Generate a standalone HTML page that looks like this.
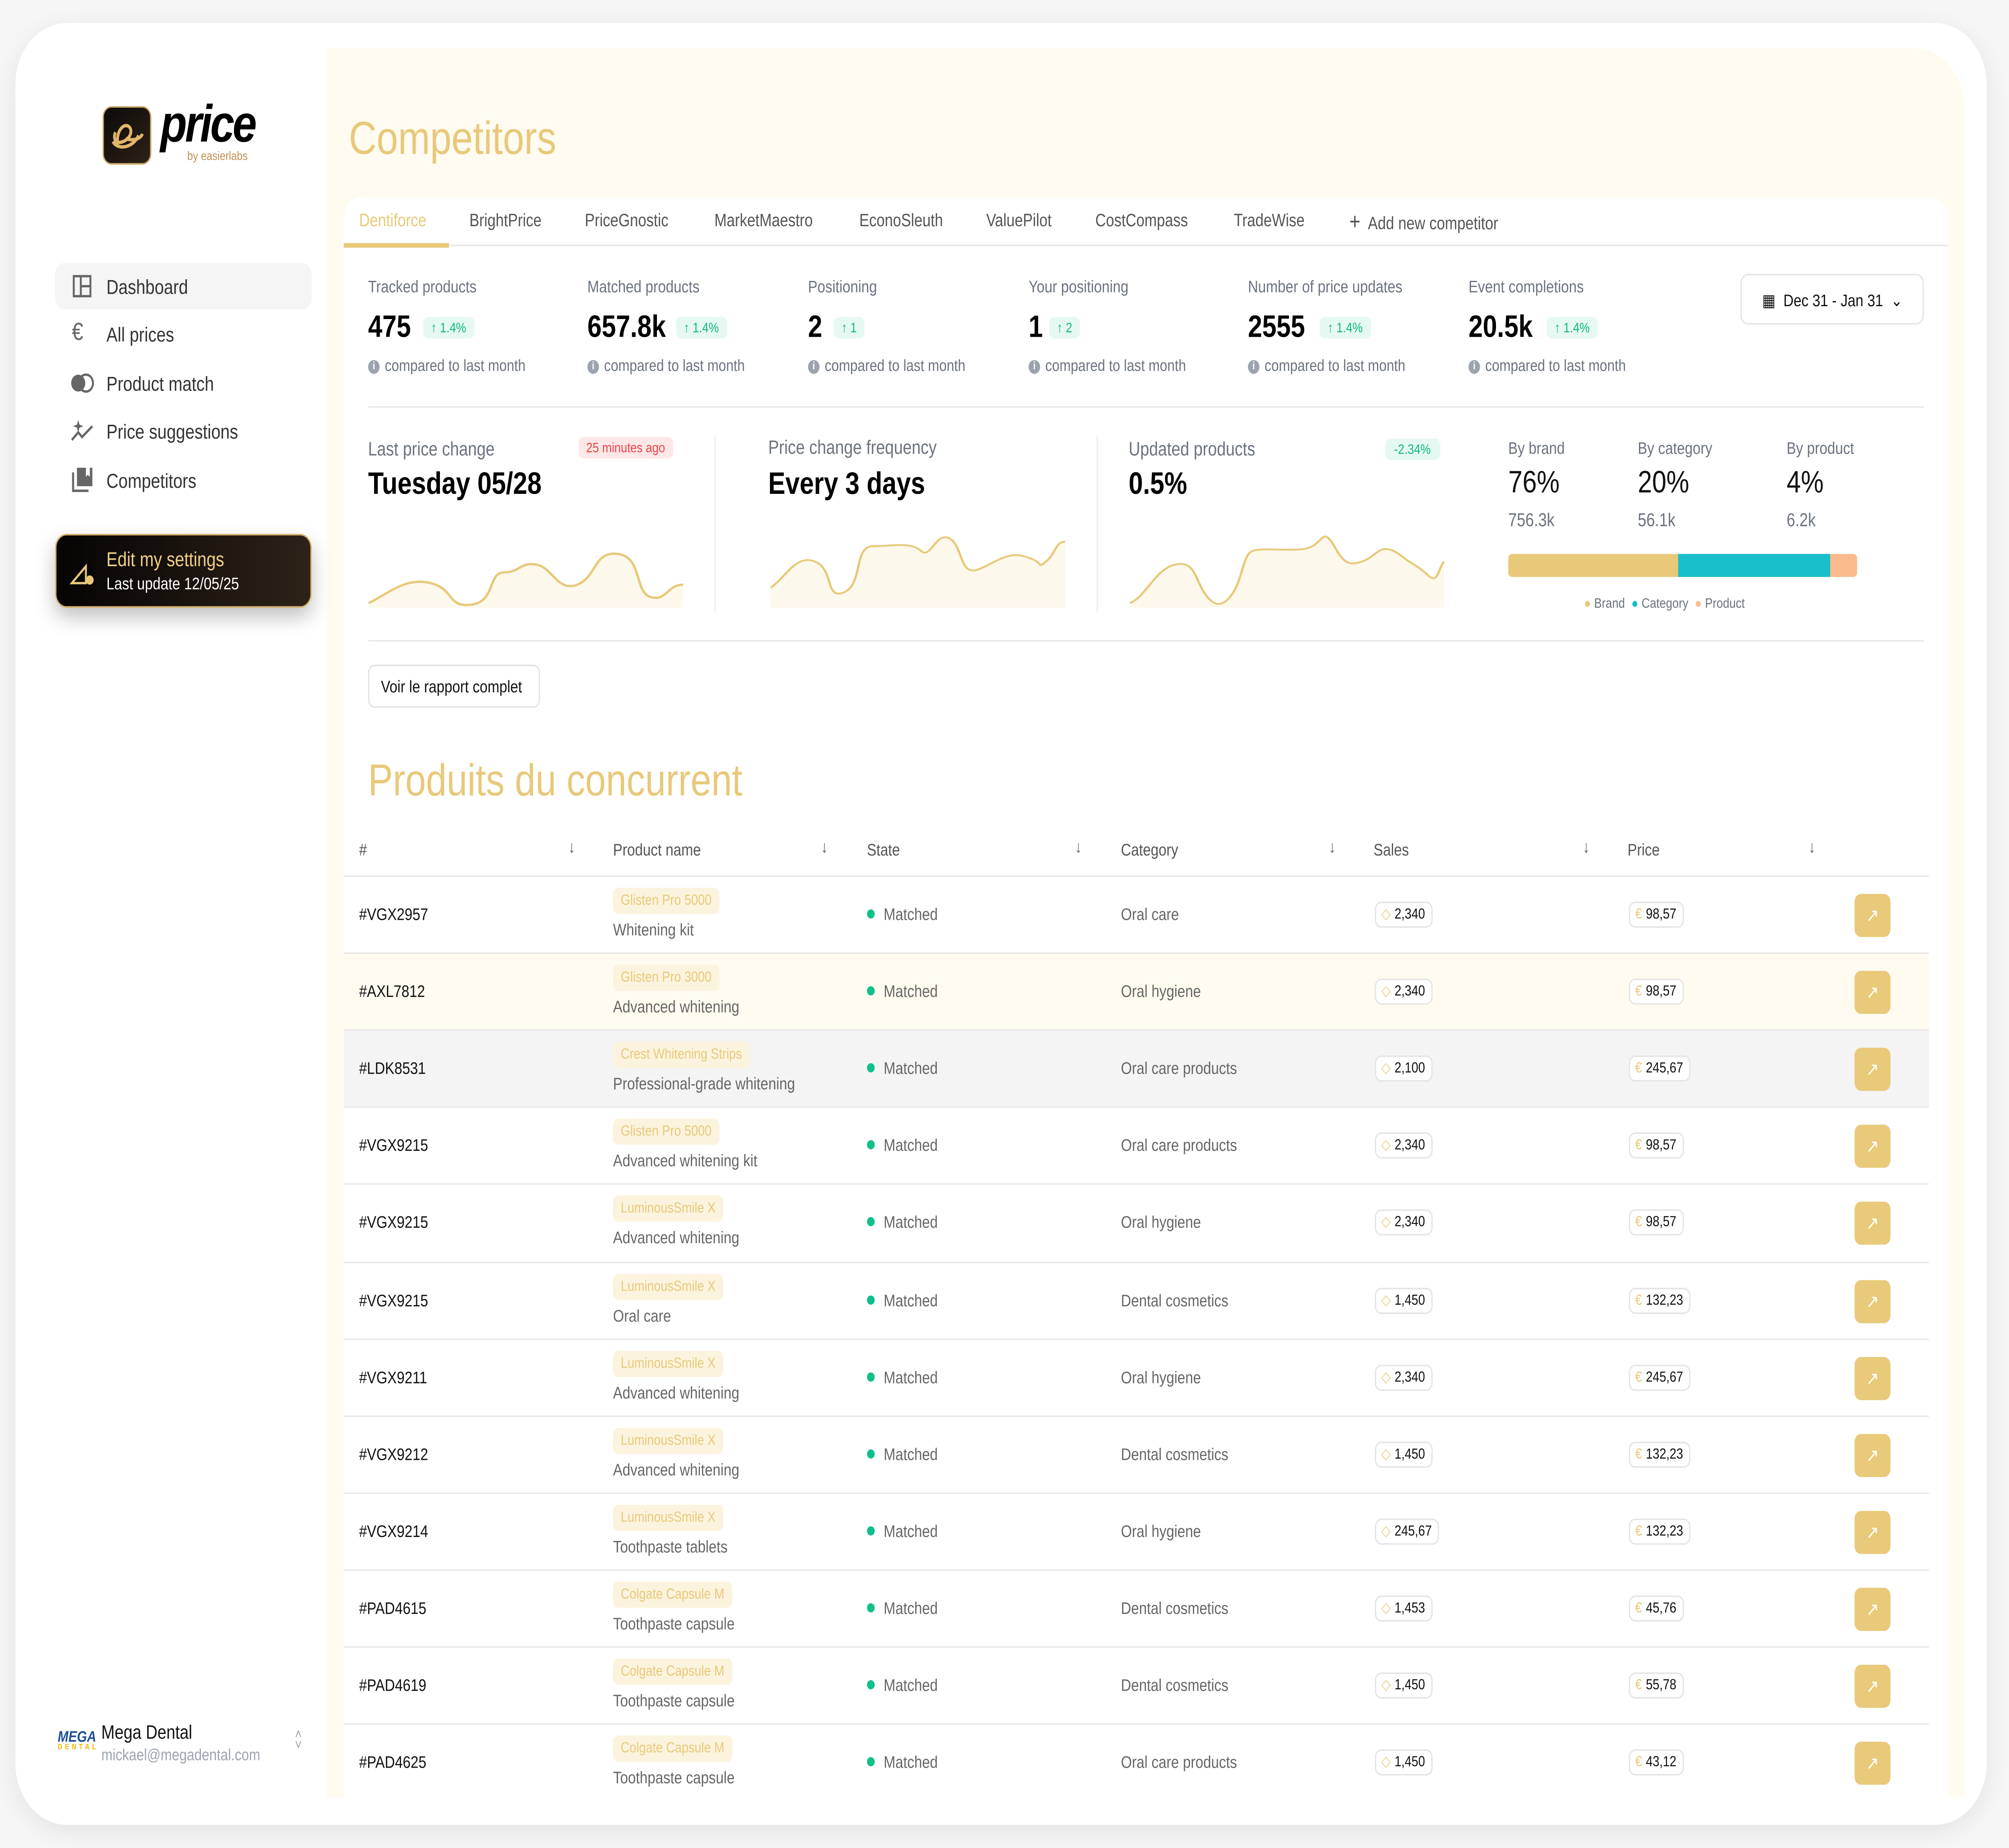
<!DOCTYPE html>
<html><head><meta charset="utf-8"><style>
*{box-sizing:border-box;margin:0;padding:0}
html,body{width:5005px;height:4599px;overflow:hidden;background:#f6f6f6}
#c{position:absolute;left:0;top:0;width:1568px;height:1201px;transform:scale(3.192,3.829);transform-origin:0 0;font-family:"Liberation Sans",sans-serif;color:#111}
.a{position:absolute;white-space:nowrap}
.card{left:12px;top:15px;width:1537px;height:1171px;background:#fff;border-radius:40px;box-shadow:0 4px 18px rgba(0,0,0,.08)}
.main{left:255px;top:31px;width:1277px;height:1137px;background:#fffbf0;border-radius:0 40px 0 0}
.panel{left:268px;top:128px;width:1251px;height:1040px;background:#fff;border-radius:14px 14px 0 0}
.nav{font-size:13px;color:#333}
.tab{top:138px;font-size:11.5px;color:#555}
.lbl{font-size:11px;color:#6b7280}
.val{font-size:20px;font-weight:bold;color:#000}
.bad{font-size:9px;color:#10b981;background:#e6f8f2;border-radius:4px;padding:2px 6px}
.cmp{font-size:10.5px;color:#6b7280}
.cmp:before{content:"i";display:inline-block;width:9px;height:9px;border-radius:50%;background:#9ca3af;color:#fff;font-size:7px;text-align:center;line-height:9px;margin-right:4px;font-weight:bold;vertical-align:1px}
.hd{top:547px;font-size:11px;color:#555}
.ar{top:545px;font-size:11px;color:#666}
.row{left:268px;width:1236px;height:50px;border-top:1.5px solid #e8e8e8}
.id{left:12px;top:19px;font-size:11px;color:#111}
.tag{left:210px;top:7px;font-size:9.5px;color:#e8c97a;background:#fbf3dd;border-radius:4px;padding:3px 6px}
.sub{left:210px;top:29px;font-size:11px;color:#666}
.st{left:408px;top:19px;font-size:11px;color:#666}
.st:before{content:"";display:inline-block;width:6px;height:6px;border-radius:50%;background:#10c08a;margin-right:7px;vertical-align:1px}
.cat{left:606px;top:19px;font-size:11px;color:#666}
.pill{top:16px;font-size:9.5px;color:#111;border:1px solid #e5e5e5;border-radius:5px;padding:2px 5px 2px 4px;background:#fff}
.pill b{color:#e8c97a;font-weight:normal;margin-right:3px}
.go{left:1178px;top:11px;width:28px;height:28px;background:#e9c97a;border-radius:5px;color:#fff;font-size:12px;text-align:center;line-height:28px}
</style></head><body><div id="c">
<div class="a card"></div>
<div class="a main"></div>
<div class="a" style="left:80px;top:69px;width:38px;height:38px;border-radius:7px;background:linear-gradient(135deg,#0c0a08,#2d2218);border:1px solid #c9a76a"></div>
<svg class="a" style="left:84px;top:76px" width="30" height="24"><path d="M4 16C8 22 20 20 24 12M8 18C6 10 12 4 16 6S18 14 12 16S4 14 6 10M14 14C20 16 26 14 27 11" fill="none" stroke="#e2b56a" stroke-width="2.2"/></svg>
<div class="a" style="left:125px;top:62px;font-size:34px;font-weight:bold;font-style:italic;letter-spacing:-1.5px;color:#000">price</div>
<div class="a" style="left:146px;top:97px;font-size:8px;color:#c09050">by easierlabs</div>
<div class="a" style="left:43px;top:171px;width:200px;height:30px;background:#f5f5f5;border-radius:7px"></div>
<svg class="a" style="left:56px;top:178px" width="16" height="16" viewBox="0 0 16 16"><rect x="1.5" y="1.5" width="13" height="13" fill="none" stroke="#666" stroke-width="1.5"/><path d="M7 1.5V14.5M7 8H14.5" stroke="#666" stroke-width="1.5"/></svg>
<div class="a nav" style="left:83px;top:179px">Dashboard</div>
<div class="a" style="left:56px;top:208px;font-size:16px;color:#666">€</div>
<div class="a nav" style="left:83px;top:210px">All prices</div>
<svg class="a" style="left:55px;top:242px" width="19" height="14"><circle cx="6" cy="7" r="5.5" fill="#666"/><circle cx="12" cy="7" r="5.5" fill="none" stroke="#666" stroke-width="1.5"/></svg>
<div class="a nav" style="left:83px;top:242px">Product match</div>
<svg class="a" style="left:55px;top:272px" width="18" height="16"><path d="M1 14L6 9L9 12L17 5" fill="none" stroke="#666" stroke-width="1.6"/><path d="M6 1L7 4L10 5L7 6L6 9L5 6L2 5L5 4Z" fill="#666"/></svg>
<div class="a nav" style="left:83px;top:273px">Price suggestions</div>
<svg class="a" style="left:56px;top:303px" width="17" height="17"><rect x="4" y="1" width="12" height="12" fill="#666"/><path d="M1 4V16H13" fill="none" stroke="#666" stroke-width="1.6"/><path d="M11 1V7L12.5 5.5L14 7V1" fill="#fff"/></svg>
<div class="a nav" style="left:83px;top:305px">Competitors</div>
<div class="a" style="left:43px;top:347px;width:200px;height:48px;border-radius:9px;background:linear-gradient(90deg,#050404,#2e2218);border:1px solid #d4b06c;box-shadow:0 6px 14px rgba(0,0,0,.25)"></div>
<svg class="a" style="left:54px;top:360px" width="22" height="22"><path d="M2 19L13 8V19Z" fill="none" stroke="#e8c97a" stroke-width="1.5"/><circle cx="16" cy="17" r="3" fill="#e8c97a"/></svg>
<div class="a" style="left:83px;top:356px;font-size:13px;color:#f0cf85">Edit my settings</div>
<div class="a" style="left:83px;top:374px;font-size:11px;color:#fff">Last update 12/05/25</div>
<div class="a" style="left:45px;top:1124px;font-size:10px;font-weight:bold;color:#1e4f98;font-style:italic">MEGA</div>
<div class="a" style="left:45px;top:1133px;font-size:5px;font-weight:bold;color:#f0b400;letter-spacing:2px">DENTAL</div>
<div class="a" style="left:79px;top:1119px;font-size:12.5px;color:#111">Mega Dental</div>
<div class="a" style="left:79px;top:1135px;font-size:10.5px;color:#9ca3af">mickael@megadental.com</div>
<div class="a" style="left:230px;top:1124px;font-size:9px;color:#9ca3af;line-height:7px">˄<br>˅</div>
<div class="a" style="left:272px;top:74px;font-size:30px;color:#e8c97a">Competitors</div>
<div class="a panel"></div>
<div class="a" style="left:268px;top:159px;width:1251px;height:1px;background:#e8e8e8"></div>
<div class="a" style="left:268px;top:158px;width:82px;height:2.5px;background:#e8c97a"></div>
<div class="a tab" style="left:280px;color:#e8c97a">Dentiforce</div>
<div class="a tab" style="left:366px">BrightPrice</div>
<div class="a tab" style="left:456px">PriceGnostic</div>
<div class="a tab" style="left:557px">MarketMaestro</div>
<div class="a tab" style="left:670px">EconoSleuth</div>
<div class="a tab" style="left:769px">ValuePilot</div>
<div class="a tab" style="left:854px">CostCompass</div>
<div class="a tab" style="left:962px">TradeWise</div>
<div class="a tab" style="left:1052px;top:136px"><span style="font-size:15px">+</span>&nbsp; Add new competitor</div>

<div class="a lbl" style="left:287px;top:181px">Tracked products</div><div class="a val" style="left:287px;top:202px">475</div><div class="a bad" style="left:330px;top:206px">↑ 1.4%</div><div class="a cmp" style="left:287px;top:232px">compared to last month</div>
<div class="a lbl" style="left:458px;top:181px">Matched products</div><div class="a val" style="left:458px;top:202px">657.8k</div><div class="a bad" style="left:527px;top:206px">↑ 1.4%</div><div class="a cmp" style="left:458px;top:232px">compared to last month</div>
<div class="a lbl" style="left:630px;top:181px">Positioning</div><div class="a val" style="left:630px;top:202px">2</div><div class="a bad" style="left:650px;top:206px">↑ 1</div><div class="a cmp" style="left:630px;top:232px">compared to last month</div>
<div class="a lbl" style="left:802px;top:181px">Your positioning</div><div class="a val" style="left:802px;top:202px">1</div><div class="a bad" style="left:818px;top:206px">↑ 2</div><div class="a cmp" style="left:802px;top:232px">compared to last month</div>
<div class="a lbl" style="left:973px;top:181px">Number of price updates</div><div class="a val" style="left:973px;top:202px">2555</div><div class="a bad" style="left:1029px;top:206px">↑ 1.4%</div><div class="a cmp" style="left:973px;top:232px">compared to last month</div>
<div class="a lbl" style="left:1145px;top:181px">Event completions</div><div class="a val" style="left:1145px;top:202px">20.5k</div><div class="a bad" style="left:1206px;top:206px">↑ 1.4%</div><div class="a cmp" style="left:1145px;top:232px">compared to last month</div>
<div class="a" style="left:1357px;top:178px;width:143px;height:33px;border:1px solid #e5e5e5;border-radius:6px;font-size:11px;color:#111;padding:10px 0 0 16px">▦&nbsp; Dec 31 - Jan 31 &nbsp;⌄</div>
<div class="a" style="left:287px;top:264px;width:1213px;height:1px;background:#e8e8e8"></div>

<div class="a" style="left:557px;top:283px;width:1px;height:115px;background:#eee"></div>
<div class="a" style="left:855px;top:283px;width:1px;height:115px;background:#eee"></div>
<div class="a" style="left:287px;top:285px;font-size:12.5px;color:#6b7280">Last price change</div>
<div class="a" style="left:451px;top:284px;font-size:9px;color:#ef4444;background:#fde8e8;border-radius:4px;padding:2px 6px">25 minutes ago</div>
<div class="a val" style="left:287px;top:304px">Tuesday 05/28</div>
<div class="a" style="left:599px;top:284px;font-size:12.5px;color:#6b7280">Price change frequency</div>
<div class="a val" style="left:599px;top:304px">Every 3 days</div>
<div class="a" style="left:880px;top:285px;font-size:12.5px;color:#6b7280">Updated products</div>
<div class="a" style="left:1080px;top:285px;font-size:9px;color:#10b981;background:#e6f8f2;border-radius:4px;padding:2px 7px">-2.34%</div>
<div class="a val" style="left:880px;top:304px">0.5%</div>
<svg class="a" style="left:285px;top:340px" width="250" height="55"><g transform="scale(1.27 1)"><path d="M2 52C15 45 25 35 40 39S50 55 65 53S75 32 85 32S95 25 105 27S118 45 130 40S140 18 155 20S165 45 175 48S185 40 195 40V55H2Z" fill="#fdf8ec"/><path d="M2 52C15 45 25 35 40 39S50 55 65 53S75 32 85 32S95 25 105 27S118 45 130 40S140 18 155 20S165 45 175 48S185 40 195 40" fill="none" stroke="#e8c97a" stroke-width="1.5"/></g></svg>
<svg class="a" style="left:598px;top:340px" width="234" height="55"><g transform="scale(1.5 1)"><path d="M2 42C10 35 15 20 25 25S30 50 40 45S45 15 55 15S75 12 80 18S88 5 95 10S100 35 110 30S125 18 135 22S140 30 145 25S150 12 155 12V55H2Z" fill="#fdf8ec"/><path d="M2 42C10 35 15 20 25 25S30 50 40 45S45 15 55 15S75 12 80 18S88 5 95 10S100 35 110 30S125 18 135 22S140 30 145 25S150 12 155 12" fill="none" stroke="#e8c97a" stroke-width="1.2"/></g></svg>
<svg class="a" style="left:878px;top:340px" width="250" height="55"><g transform="scale(1.52 1)"><path d="M2 52C10 48 15 30 25 27S35 35 40 45S50 55 55 45S60 20 65 18S80 18 90 17S100 5 104 10S110 28 118 26S128 18 132 17S140 20 143 23S150 28 155 34S160 30 163 25V55H2Z" fill="#fdf8ec"/><path d="M2 52C10 48 15 30 25 27S35 35 40 45S50 55 55 45S60 20 65 18S80 18 90 17S100 5 104 10S110 28 118 26S128 18 132 17S140 20 143 23S150 28 155 34S160 30 163 25" fill="none" stroke="#e8c97a" stroke-width="1.2"/></g></svg>

<div class="a lbl" style="left:1176px;top:286px">By brand</div><div class="a" style="left:1176px;top:303px;font-size:20px">76%</div><div class="a" style="left:1176px;top:331px;font-size:12px;color:#6b7280">756.3k</div>
<div class="a lbl" style="left:1277px;top:286px">By category</div><div class="a" style="left:1277px;top:303px;font-size:20px">20%</div><div class="a" style="left:1277px;top:331px;font-size:12px;color:#6b7280">56.1k</div>
<div class="a lbl" style="left:1393px;top:286px">By product</div><div class="a" style="left:1393px;top:303px;font-size:20px">4%</div><div class="a" style="left:1393px;top:331px;font-size:12px;color:#6b7280">6.2k</div>
<div class="a" style="left:1176px;top:360px;width:272px;height:15px;border-radius:3px;overflow:hidden;background:linear-gradient(90deg,#e8c97a 0 48.7%,#19bfcb 48.7% 92.3%,#fbba8c 92.3%)"></div>
<div class="a" style="left:1235px;top:387px;font-size:9px;color:#6b7280"><span style="color:#e8c97a">●</span> Brand &nbsp;<span style="color:#19bfcb">●</span> Category &nbsp;<span style="color:#fbba8c">●</span> Product</div>
<div class="a" style="left:287px;top:416px;width:1213px;height:1px;background:#e8e8e8"></div>
<div class="a" style="left:287px;top:432px;width:134px;height:28px;border:1px solid #e3e3e3;border-radius:5px;font-size:11px;padding:8px 0 0 9px">Voir le rapport complet</div>
<div class="a" style="left:287px;top:492px;font-size:29px;color:#e8c97a">Produits du concurrent</div>

<div class="a hd" style="left:280px">#</div><div class="a ar" style="left:443px">↓</div>
<div class="a hd" style="left:478px">Product name</div><div class="a ar" style="left:640px">↓</div>
<div class="a hd" style="left:676px">State</div><div class="a ar" style="left:838px">↓</div>
<div class="a hd" style="left:874px">Category</div><div class="a ar" style="left:1036px">↓</div>
<div class="a hd" style="left:1071px">Sales</div><div class="a ar" style="left:1234px">↓</div>
<div class="a hd" style="left:1269px">Price</div><div class="a ar" style="left:1410px">↓</div>

<div class="a row" style="top:569px"><div class="a id">#VGX2957</div><div class="a tag">Glisten Pro 5000</div><div class="a sub">Whitening kit</div><div class="a st">Matched</div><div class="a cat">Oral care</div><div class="a pill" style="left:804px"><b>◇</b>2,340</div><div class="a pill" style="left:1002px"><b>€</b>98,57</div><div class="a go">↗</div></div>
<div class="a row" style="top:619px;background:#fffbf0"><div class="a id">#AXL7812</div><div class="a tag">Glisten Pro 3000</div><div class="a sub">Advanced whitening</div><div class="a st">Matched</div><div class="a cat">Oral hygiene</div><div class="a pill" style="left:804px"><b>◇</b>2,340</div><div class="a pill" style="left:1002px"><b>€</b>98,57</div><div class="a go">↗</div></div>
<div class="a row" style="top:669px;background:#f4f4f4"><div class="a id">#LDK8531</div><div class="a tag">Crest Whitening Strips</div><div class="a sub">Professional-grade whitening</div><div class="a st">Matched</div><div class="a cat">Oral care products</div><div class="a pill" style="left:804px"><b>◇</b>2,100</div><div class="a pill" style="left:1002px"><b>€</b>245,67</div><div class="a go">↗</div></div>
<div class="a row" style="top:719px"><div class="a id">#VGX9215</div><div class="a tag">Glisten Pro 5000</div><div class="a sub">Advanced whitening kit</div><div class="a st">Matched</div><div class="a cat">Oral care products</div><div class="a pill" style="left:804px"><b>◇</b>2,340</div><div class="a pill" style="left:1002px"><b>€</b>98,57</div><div class="a go">↗</div></div>
<div class="a row" style="top:769px"><div class="a id">#VGX9215</div><div class="a tag">LuminousSmile X</div><div class="a sub">Advanced whitening</div><div class="a st">Matched</div><div class="a cat">Oral hygiene</div><div class="a pill" style="left:804px"><b>◇</b>2,340</div><div class="a pill" style="left:1002px"><b>€</b>98,57</div><div class="a go">↗</div></div>
<div class="a row" style="top:820px"><div class="a id">#VGX9215</div><div class="a tag">LuminousSmile X</div><div class="a sub">Oral care</div><div class="a st">Matched</div><div class="a cat">Dental cosmetics</div><div class="a pill" style="left:804px"><b>◇</b>1,450</div><div class="a pill" style="left:1002px"><b>€</b>132,23</div><div class="a go">↗</div></div>
<div class="a row" style="top:870px"><div class="a id">#VGX9211</div><div class="a tag">LuminousSmile X</div><div class="a sub">Advanced whitening</div><div class="a st">Matched</div><div class="a cat">Oral hygiene</div><div class="a pill" style="left:804px"><b>◇</b>2,340</div><div class="a pill" style="left:1002px"><b>€</b>245,67</div><div class="a go">↗</div></div>
<div class="a row" style="top:920px"><div class="a id">#VGX9212</div><div class="a tag">LuminousSmile X</div><div class="a sub">Advanced whitening</div><div class="a st">Matched</div><div class="a cat">Dental cosmetics</div><div class="a pill" style="left:804px"><b>◇</b>1,450</div><div class="a pill" style="left:1002px"><b>€</b>132,23</div><div class="a go">↗</div></div>
<div class="a row" style="top:970px"><div class="a id">#VGX9214</div><div class="a tag">LuminousSmile X</div><div class="a sub">Toothpaste tablets</div><div class="a st">Matched</div><div class="a cat">Oral hygiene</div><div class="a pill" style="left:804px"><b>◇</b>245,67</div><div class="a pill" style="left:1002px"><b>€</b>132,23</div><div class="a go">↗</div></div>
<div class="a row" style="top:1020px"><div class="a id">#PAD4615</div><div class="a tag">Colgate Capsule M</div><div class="a sub">Toothpaste capsule</div><div class="a st">Matched</div><div class="a cat">Dental cosmetics</div><div class="a pill" style="left:804px"><b>◇</b>1,453</div><div class="a pill" style="left:1002px"><b>€</b>45,76</div><div class="a go">↗</div></div>
<div class="a row" style="top:1070px"><div class="a id">#PAD4619</div><div class="a tag">Colgate Capsule M</div><div class="a sub">Toothpaste capsule</div><div class="a st">Matched</div><div class="a cat">Dental cosmetics</div><div class="a pill" style="left:804px"><b>◇</b>1,450</div><div class="a pill" style="left:1002px"><b>€</b>55,78</div><div class="a go">↗</div></div>
<div class="a row" style="top:1120px;height:48px"><div class="a id">#PAD4625</div><div class="a tag">Colgate Capsule M</div><div class="a sub">Toothpaste capsule</div><div class="a st">Matched</div><div class="a cat">Oral care products</div><div class="a pill" style="left:804px"><b>◇</b>1,450</div><div class="a pill" style="left:1002px"><b>€</b>43,12</div><div class="a go">↗</div></div>
</div></body></html>
